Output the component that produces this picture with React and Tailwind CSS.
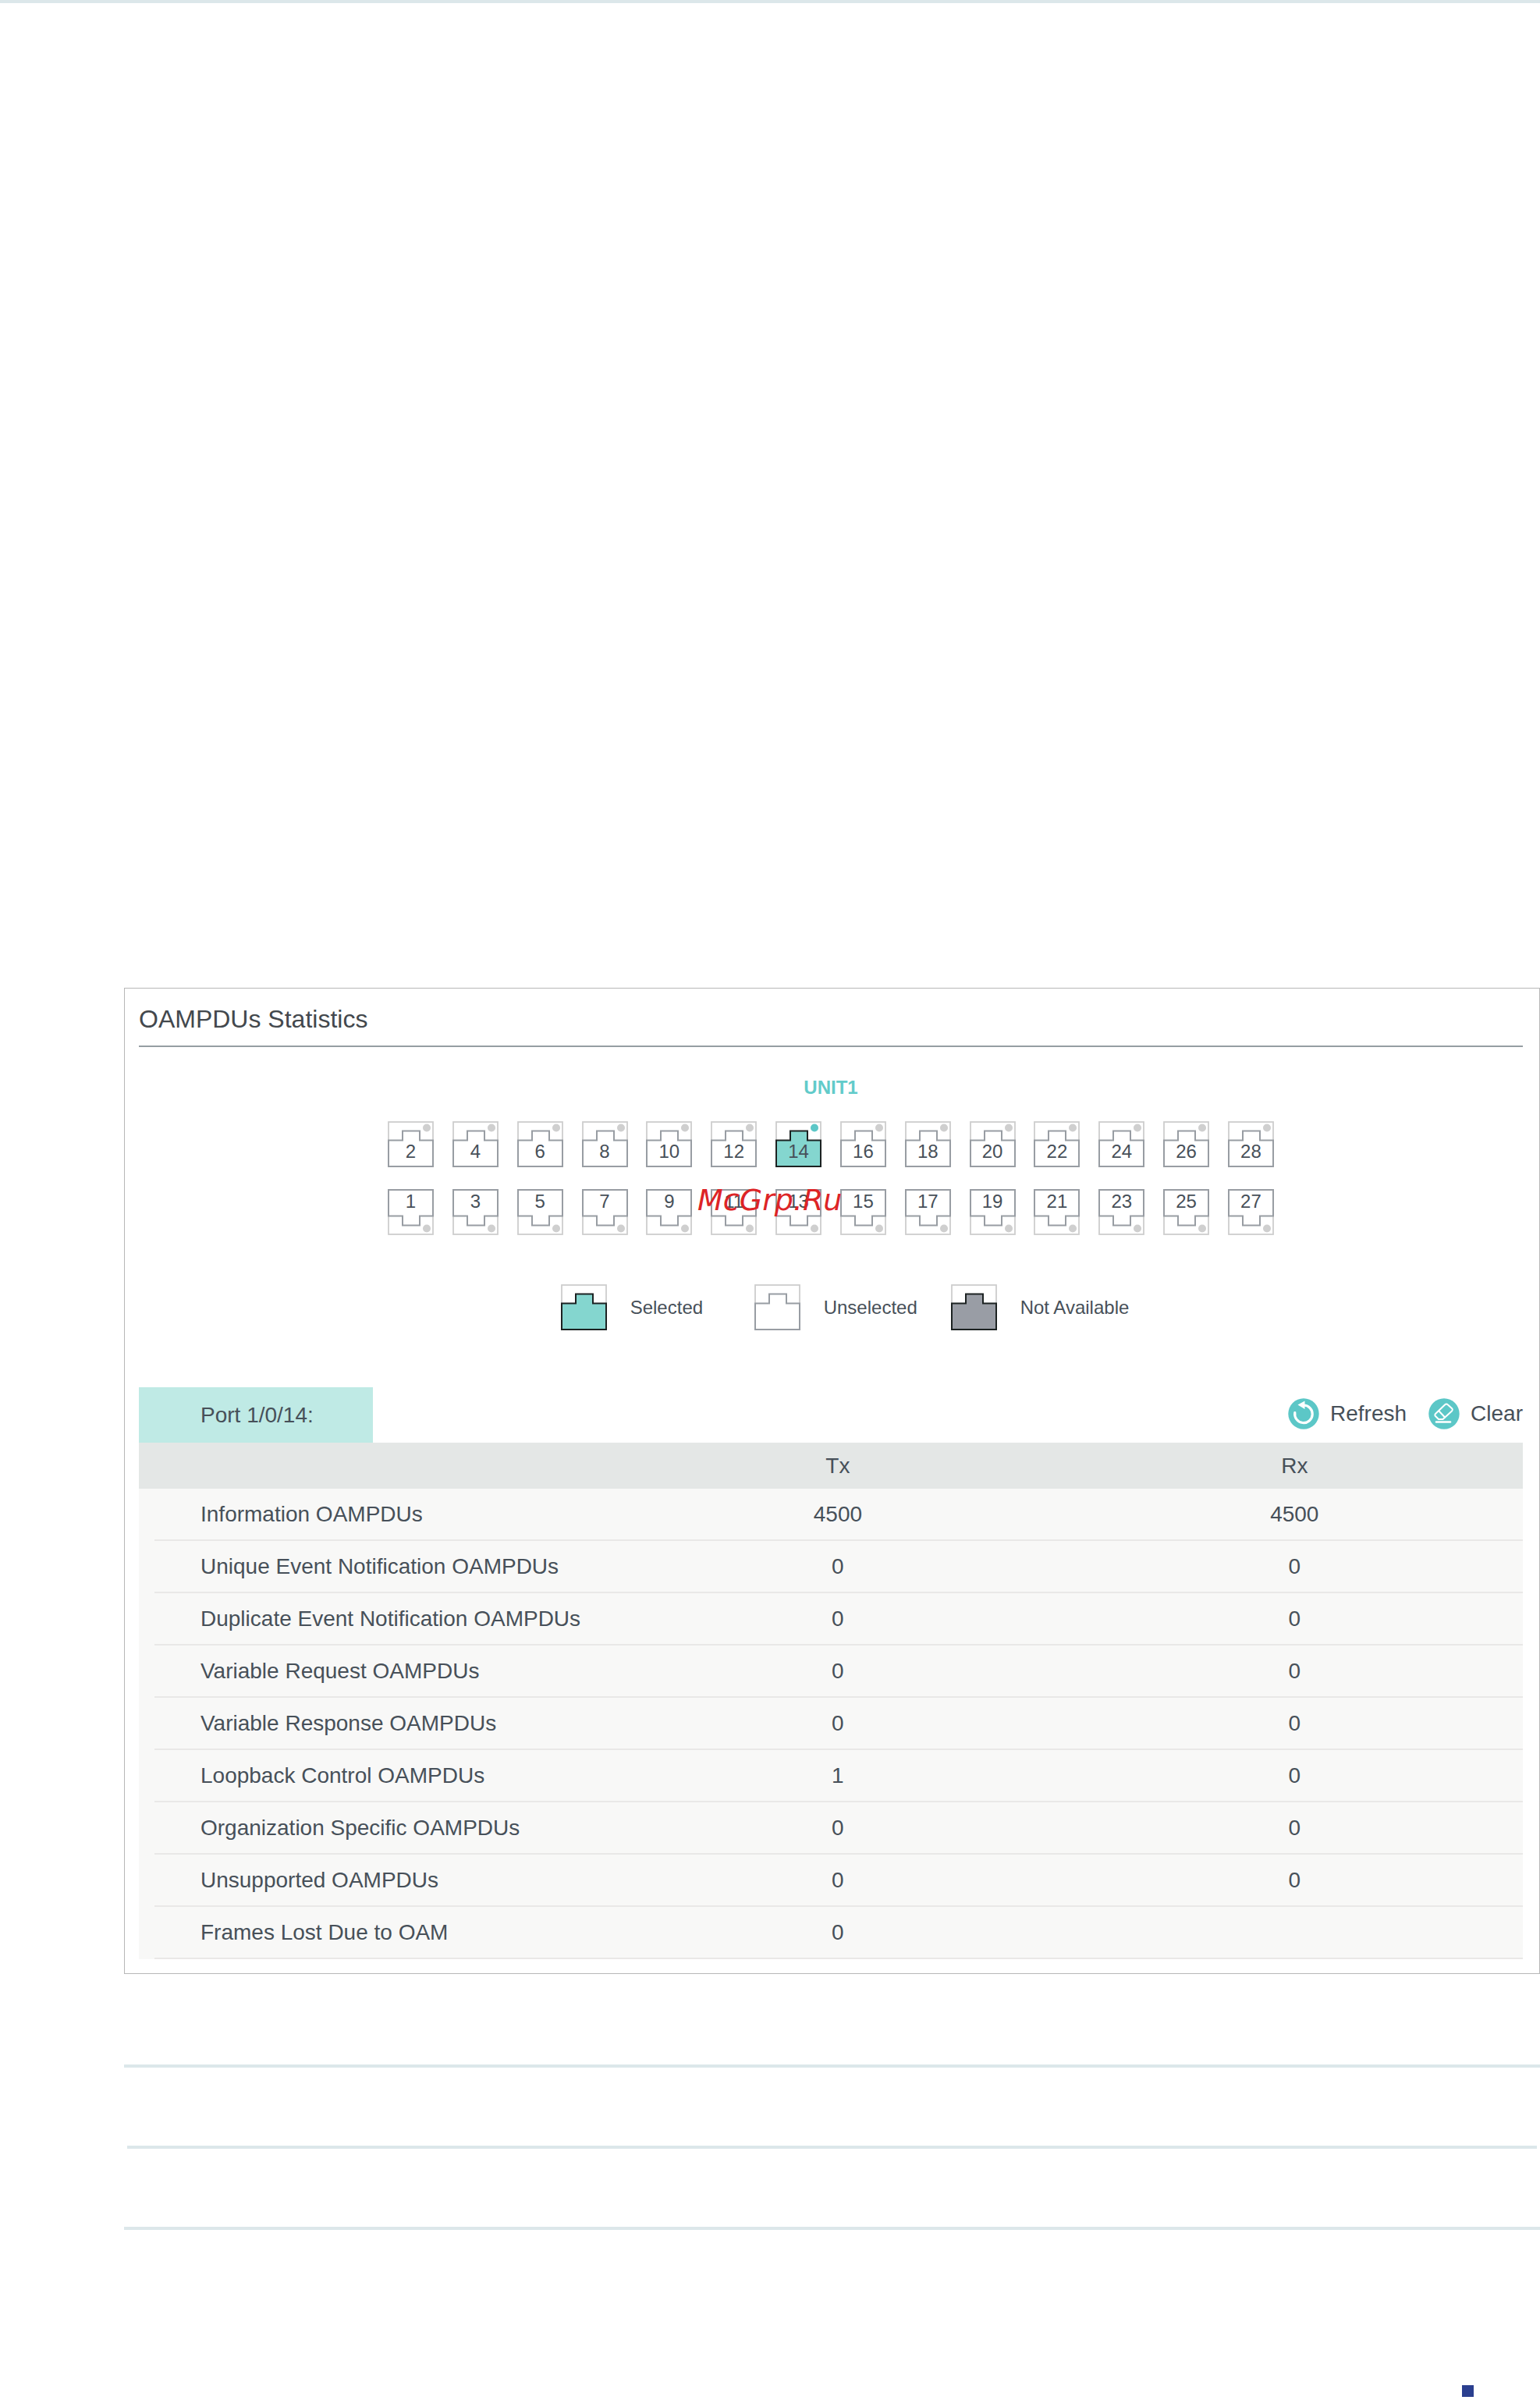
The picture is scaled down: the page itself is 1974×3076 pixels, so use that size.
const evenPorts = [2, 4, 6, 8, 10, 12, 14, 16, 18, 20, 22, 24, 26, 28];
const oddPorts = evenPorts.map((port) => port - 1);
const selectedPort = 14;

const rows = [
  { label: 'Information OAMPDUs', tx: '4500', rx: '4500' },
  { label: 'Unique Event Notification OAMPDUs', tx: '0', rx: '0' },
  { label: 'Duplicate Event Notification OAMPDUs', tx: '0', rx: '0' },
  { label: 'Variable Request OAMPDUs', tx: '0', rx: '0' },
  { label: 'Variable Response OAMPDUs', tx: '0', rx: '0' },
  { label: 'Loopback Control OAMPDUs', tx: '1', rx: '0' },
  { label: 'Organization Specific OAMPDUs', tx: '0', rx: '0' },
  { label: 'Unsupported OAMPDUs', tx: '0', rx: '0' },
  { label: 'Frames Lost Due to OAM', tx: '0', rx: '' },
];

const portStyles = {
  selected: { fill: '#84d6cf', stroke: '#1c2222', dot: '#5cc7c7' },
  unselected: { fill: '#ffffff', stroke: '#989da3', dot: '#cfcfcf' },
  unavailable: { fill: '#999da5', stroke: '#1c2222', dot: '#cfcfcf' },
};

const PortIcon = ({ status = 'unselected', flipped = false, showDot = true }) => {
  const { fill, stroke, dot } = portStyles[status];

  return (
    <svg viewBox="0 0 59 59" className={`block size-[59px] ${flipped ? '-scale-y-100' : ''}`} aria-hidden="true">
      <rect x="1" y="1" width="57" height="57" fill="#fff" stroke="#cecece" strokeWidth="1.8" />
      <path d="M1 24.5H19V12.5H41V24.5H58V58H1Z" fill={fill} stroke={stroke} strokeWidth="2" />
      {showDot && <circle cx="50" cy="8.5" r="5" fill={dot} />}
    </svg>
  );
};

const Port = ({ number, flipped }) => {
  const selected = number === selectedPort;

  return (
    <button type="button" aria-pressed={selected} className="grid size-[59px]">
      <span className="col-start-1 row-start-1">
        <PortIcon status={selected ? 'selected' : 'unselected'} flipped={flipped} />
      </span>
      <span
        className={`relative col-start-1 row-start-1 text-center text-2xl leading-8 ${
          flipped ? 'self-start' : 'self-end pb-1'
        }`}
      >
        {number}
      </span>
    </button>
  );
};

const RefreshIcon = () => (
  <svg viewBox="0 0 40 40" className="size-10" aria-hidden="true">
    <circle cx="20" cy="20" r="19.7" fill="#5cc7c7" />
    <path d="M8.8 18.5A11.3 11.3 0 1 0 20 9" fill="none" stroke="#fff" strokeWidth="3.2" strokeLinecap="round" />
    <path d="M12.5 8.5L21.5 3.5V14Z" fill="#fff" />
  </svg>
);

const EraserIcon = () => (
  <svg viewBox="0 0 40 40" className="size-10" aria-hidden="true">
    <circle cx="20" cy="20" r="19.7" fill="#5cc7c7" />
    <g fill="none" stroke="#fff" strokeWidth="2" strokeLinejoin="round" strokeLinecap="round">
      <path d="M21 8.5Q23 6.5 25 8.5L30.5 13.5Q31.5 15 30 16.5L18.5 27H13L8.5 22.5Q8 21 9 20Z" />
      <path d="M13.5 16.5L21 24.5" />
      <path d="M10 30.5H28" strokeWidth="2.6" />
    </g>
  </svg>
);

const PageRule = ({ inset = false }) => <hr className={`h-1 border-0 bg-[#dce7ea] ${inset ? 'mx-1' : ''}`} />;

export default function App() {
  return (
    <main className="flex min-h-screen flex-col bg-white font-['Liberation_Sans',Arial,sans-serif] text-[#475059]">
      <PageRule />

      <section className="mt-[1262px] ml-[159px] border border-[#b7b7b7] pr-[21px] pb-[18px] pl-[18px]">
        <h1 className="border-b-2 border-[#959ea3] pt-5 pb-[15px] text-[32px] leading-[38px] text-[#43484d]">
          OAMPDUs Statistics
        </h1>

        {/* Unit front panel */}
        <div className="relative flex flex-col items-center">
          <h2 className="mt-9 text-2xl leading-8 font-bold text-[#62cbca]">UNIT1</h2>
          <div className="mt-[27px] flex w-[1136px] flex-col gap-7">
            <div className="flex justify-between">
              {evenPorts.map((port) => (
                <Port key={port} number={port} />
              ))}
            </div>
            <div className="flex justify-between">
              {oddPorts.map((port) => (
                <Port key={port} number={port} flipped />
              ))}
            </div>
          </div>
          <span className="pointer-events-none absolute top-[170px] left-[716px] font-['DejaVu_Sans',sans-serif] text-[38px] leading-[52px] text-[#dd2426] italic">
            McGrp.Ru
          </span>
        </div>

        {/* Legend */}
        <ul className="mt-[63px] grid grid-cols-[248px_252px_auto] justify-center pl-9 text-2xl">
          <li className="flex items-center gap-[30px]">
            <PortIcon status="selected" showDot={false} />
            Selected
          </li>
          <li className="flex items-center gap-[30px]">
            <PortIcon showDot={false} />
            Unselected
          </li>
          <li className="flex items-center gap-[30px]">
            <PortIcon status="unavailable" showDot={false} />
            Not Available
          </li>
        </ul>

        {/* Counters for the selected port */}
        <div className="mt-[73px] flex items-center justify-between text-[28px]">
          <h3 className="flex h-[71px] w-[300px] items-center bg-[#bfeae5] pl-[79px]">Port 1/0/14:</h3>
          <div className="flex items-center gap-7 pb-1">
            <button type="button" className="flex items-center gap-[14px]">
              <RefreshIcon />
              Refresh
            </button>
            <button type="button" className="flex items-center gap-[14px]">
              <EraserIcon />
              Clear
            </button>
          </div>
        </div>

        <table className="w-full table-fixed border-separate border-spacing-0 text-[28px] leading-8">
          <thead>
            <tr className="h-[59px] bg-[#e4e7e6]">
              <td />
              <th scope="col" className="w-[33%] font-normal">
                Tx
              </th>
              <th scope="col" className="w-[33%] font-normal">
                Rx
              </th>
            </tr>
          </thead>
          <tbody>
            {rows.map((row) => (
              <tr key={row.label} className="bg-[#f8f8f7]">
                <th scope="row" className="pl-5 text-left font-normal">
                  <div className="flex h-[67px] items-center border-b-2 border-[#e9e8e7] pl-[59px]">{row.label}</div>
                </th>
                <td className="border-b-2 border-[#e9e8e7] text-center">{row.tx}</td>
                <td className="border-b-2 border-[#e9e8e7] text-center">{row.rx}</td>
              </tr>
            ))}
          </tbody>
        </table>
      </section>

      <div className="mt-[116px] ml-[159px] flex flex-col gap-[100px]">
        <PageRule />
        <PageRule inset />
        <PageRule />
      </div>

      <footer className="mt-auto flex justify-end pr-[85px] pb-1">
        <span className="size-[15px] bg-[#2b3f8f]" />
      </footer>
    </main>
  );
}
